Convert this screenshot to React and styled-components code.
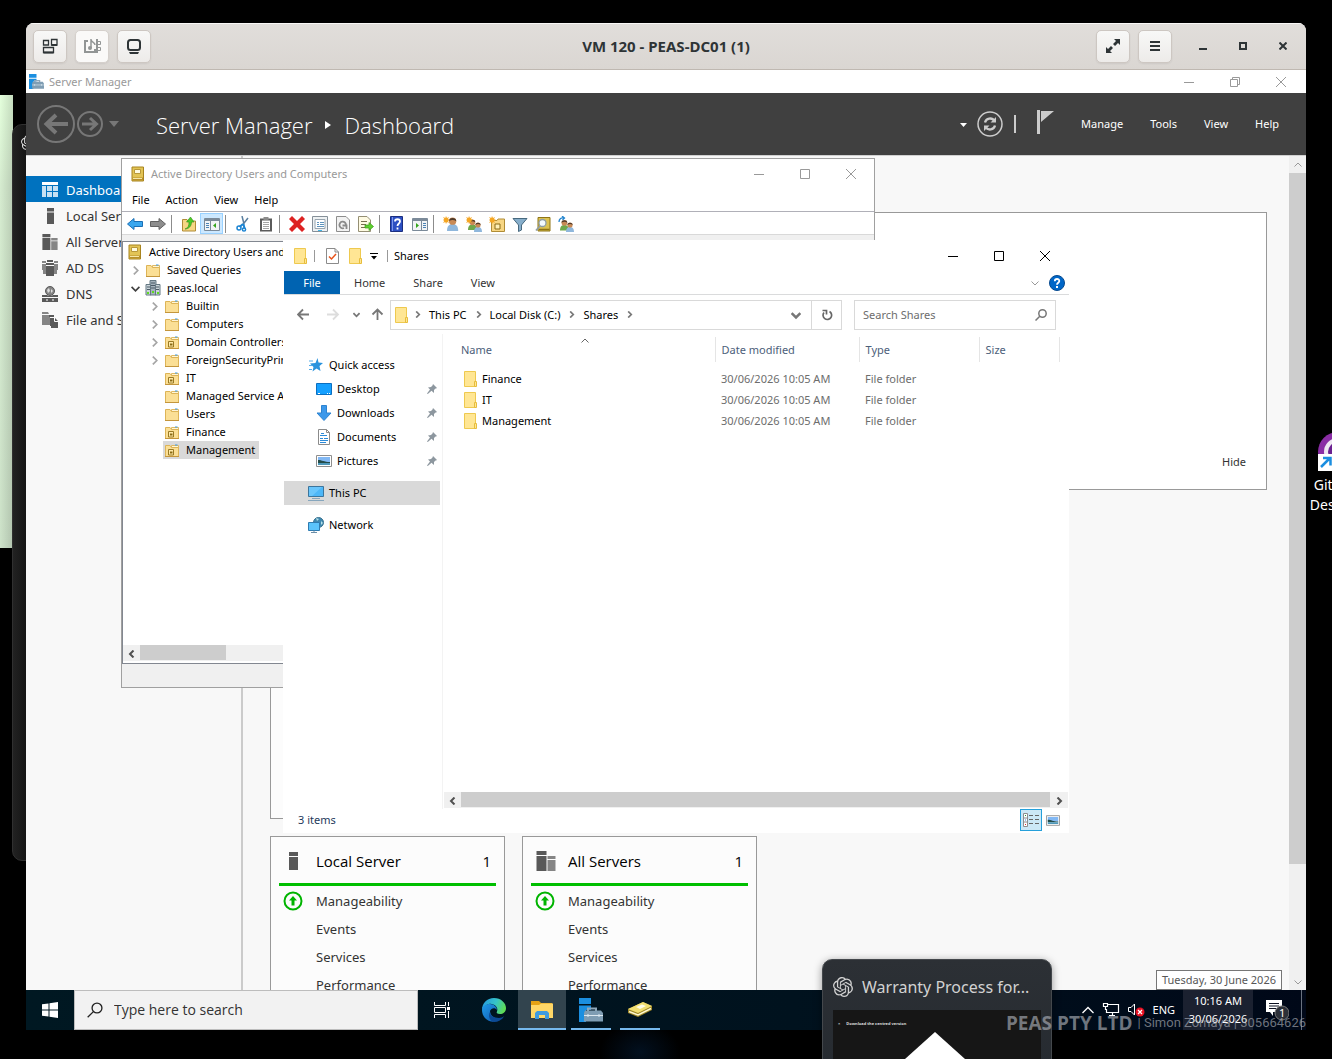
import React from "react";
import styled, { createGlobalStyle } from "styled-components";
import { SiOpenai } from "react-icons/si";

const GlobalStyle = createGlobalStyle`
  * { box-sizing: border-box; }
  body {
    margin: 0;
    background: #000;
    font-family: "Noto Sans", "Open Sans", sans-serif;
    font-size: 11px;
    line-height: 18px;
    color: #000;
  }
  button, input {
    font: inherit;
    color: inherit;
    border: 0;
    padding: 0;
    background: none;
  }
  a { color: inherit; text-decoration: none; }
  svg { display: block; flex: none; }
  ul { list-style: none; margin: 0; padding: 0; }
  h1, h2, h3, p { margin: 0; font: inherit; }
`;

/* ---------- icons ---------- */

const Svg = ({ w = 16, h = w, box, children, ...rest }) => (
  <svg width={w} height={h} viewBox={box || `0 0 ${w} ${h}`} fill="none" aria-hidden="true" {...rest}>
    {children}
  </svg>
);

const Chevron = ({ dir = "right", color = "#777", size = 8, weight = 2 }) => {
  const d = {
    right: "M2.5 .5L6 4L2.5 7.5",
    left: "M5.5 .5L2 4L5.5 7.5",
    down: "M.5 2.5L4 6L7.5 2.5",
    up: "M.5 5.5L4 2L7.5 5.5",
  }[dir];
  return (
    <Svg w={size} box="0 0 8 8">
      <path d={d} stroke={color} strokeWidth={weight} />
    </Svg>
  );
};

const MinIcon = ({ color }) => (
  <Svg w={10}><path d="M0 5.5H10" stroke={color} /></Svg>
);
const MaxIcon = ({ color }) => (
  <Svg w={10}><path d="M.5 .5H9.5V9.5H.5Z" stroke={color} /></Svg>
);
const RestoreIcon = ({ color }) => (
  <Svg w={10}><path d="M.5 2.5H7.5V9.5H.5ZM2.5 2.5V.5H9.5V7.5H7.5" stroke={color} /></Svg>
);
const CloseIcon = ({ color }) => (
  <Svg w={10}><path d="M0 0L10 10M10 0L0 10" stroke={color} /></Svg>
);

const PlainFolder = () => (
  <Svg w={14} h={16}>
    <path d="M.5 .5H11.5V15.5H.5Z" fill="#ffe694" stroke="#eec94f" />
    <path d="M10.5 10.5H12.5V15.5H10.5Z" fill="#ffe694" stroke="#e7bd3c" />
  </Svg>
);

const TreeFolder = ({ unit }) => (
  <Svg w={14} h={13}>
    <path d="M6.500 1.500H13.500V5H6.500Z" fill="#fff6d8" stroke="#e0b961" />
    <path d="M10 1H12.500" stroke="#3b9be8" />
    <path d="M.5 1.500H5L6.500 3.500H13.500V12.500H.5Z" fill="#fbdf95" stroke="#ddb457" />
    <path d="M0 12.500H14" stroke="#c4963c" />
    {unit && <path d="M3.500 5.500H8.500V11H3.500Z" fill="#ffe9a8" stroke="#9a7a24" />}
    {unit && <path d="M5 7.500H7.500V9.500H5Z" fill="#8a6a14" />}
  </Svg>
);

const BookIcon = () => (
  <Svg w={14} h={16}>
    <path d="M1 1H12.500V15H1Z" fill="#e2c455" stroke="#a8841f" />
    <path d="M1.500 11.500H12V14.500H1.500Z" fill="#b8902a" />
    <path d="M2 12.500H11" stroke="#f5e7a8" />
    <path d="M3.500 3.500H9.500V7.500H3.500Z" fill="#fffbe0" stroke="#b8983a" />
  </Svg>
);

const DomainIcon = () => (
  <Svg w={16}>
    <path d="M5 .5H11V15H5Z" fill="#a5b3bd" stroke="#657883" />
    <path d="M1 4.500H5.500V15H1ZM10.500 4.500H15V15H10.500Z" fill="#cbd5da" stroke="#657883" />
    <path d="M6 3H10M6 5.500H10M6 8H10M2 7H5M2 9.500H5M11 7H14M11 9.500H14" stroke="#4b5a66" />
    <path d="M3 12V14M8 11V13M13 12V14" stroke="#5edc1f" strokeWidth="2" />
  </Svg>
);

const Server = ({ w = 9, h = 18 }) => (
  <Svg w={w} h={h} box="0 0 9 18" preserveAspectRatio="none">
    <path d="M0 0H9V4H0ZM0 5H9V18H0Z" fill="#595959" />
  </Svg>
);
const Servers = ({ w = 16 }) => (
  <Svg w={w} box="0 0 19 20">
    <path d="M0 0H10V4H0ZM0 5H10V20H0Z" fill="#595959" />
    <path d="M11 5H19V8H11ZM11 9H19V20H11Z" fill="#858585" />
  </Svg>
);
const AdDsIcon = () => (
  <Svg w={16}>
    <path d="M0 1H4V3H0ZM0 4H4V14H1V10H0ZM12 1H16V3H12ZM12 4H16V10H15V14H12Z" fill="#858585" />
    <path d="M5 0H11V2H5ZM4 3H12V5H4ZM4 6H12V16H4Z" fill="#595959" />
  </Svg>
);
const DnsIcon = () => (
  <Svg w={16}>
    <circle cx="8" cy="5" r="4.500" fill="#858585" stroke="#595959" />
    <path d="M5 4L7 2L8 5L6 7ZM9 3L11 5L9 7Z" fill="#ddd" />
    <path d="M0 9H5L6.500 10H9.500L11 9H16V11H0ZM0 12H16V16H0Z" fill="#595959" />
    <path d="M4 14H6M10 14H12" stroke="#fff" />
  </Svg>
);
const StorageIcon = () => (
  <Svg w={16}>
    <path d="M0 0H6L7 2H0ZM0 3H8V13H0Z" fill="#858585" />
    <path d="M7 3H12V5H7ZM8 6H13L16 9V16H9V14H8Z" fill="#595959" />
    <path d="M12.500 6V9.500H16" stroke="#fff" />
  </Svg>
);
const DashboardIcon = () => (
  <Svg w={16}>
    <path d="M0 0H16V3H0Z" fill="#fff" />
    <path d="M0 4H4V15H0ZM5 4H10V9H5ZM11 4H16V9H11ZM5 10H10V15H5ZM11 10H16V15H11Z" fill="#c7e1f3" />
  </Svg>
);

const ToolboxIcon = ({ size = 15 }) => (
  <Svg w={size} box="0 0 24 24">
    <path d="M0 0H12V6H0ZM0 7.500H12V12H7V24H0Z" fill="#1b8fe0" />
    <path d="M9 13V10.500H17V13" stroke="#8fa8bb" strokeWidth="2" />
    <path d="M6 12.500H22L24 15V23.500H5V15Z" fill="#7f9db3" />
    <path d="M5 17.500H24M9 16V19M20 16V19" stroke="#dce8f0" />
  </Svg>
);

const StarIcon = () => (
  <Svg w={14}>
    <path d="M8.500 0L9.500 4.500L14 5L10.500 8L11.500 13L7.500 10.500L3.500 13.500L4.500 9L1 5.500L6.500 5Z" fill="#2a93dd" />
    <path d="M0 3H4M0 7.500H3M0 11.500H3" stroke="#54adea" />
  </Svg>
);
const DesktopIcon = () => (
  <Svg w={16} h={12}>
    <path d="M.5 .5H15.500V11.500H.5Z" fill="#15a0ff" stroke="#0b6fc0" />
    <path d="M2 10.500H4M11 10.500H12M13 10.500H14" stroke="#fff" />
  </Svg>
);
const DownloadIcon = () => (
  <Svg w={16}>
    <path d="M5.500 .5H10.500V8H15L8 15.500L1 8H5.500Z" fill="#3c98ea" stroke="#2d83d0" />
  </Svg>
);
const DocumentIcon = () => (
  <Svg w={14} h={16}>
    <path d="M1.500 .5H9.500L12.500 3.500V15.500H1.500Z" fill="#fff" stroke="#8b8b8b" />
    <path d="M9.500 .5V3.500H12.500" stroke="#8b8b8b" />
    <path d="M4 4.500H7M3 6.500H10M7 9.500H11M3 11.500H11M3 9.500H6M3 13.500H9" stroke="#2c8bd8" />
  </Svg>
);
const PictureIcon = ({ w = 16, h = 12 }) => (
  <Svg w={w} h={h} box="0 0 16 12">
    <path d="M.5 .5H15.500V11.500H.5Z" fill="#fff" stroke="#8e8e8e" />
    <path d="M2 2H14V7H2Z" fill="#82b8f4" />
    <path d="M2 5C6 5 8 7 14 7V8H2Z" fill="#234c4a" />
    <path d="M2 8H14V10H2Z" fill="#4d97b8" />
  </Svg>
);
const PcIcon = () => (
  <Svg w={16}>
    <path d="M.5 1.500H15.500V11.500H.5Z" fill="#4db7f8" stroke="#3c759c" />
    <path d="M1 2H14L4 11H1Z" fill="#7fd0ff" opacity=".6" />
    <path d="M4 13.500H12M0 15.500H16" stroke="#86a6bd" />
  </Svg>
);
const NetworkIcon = () => (
  <Svg w={16}>
    <circle cx="10.500" cy="5.500" r="5" fill="#3f88b0" stroke="#3a7390" />
    <path d="M8 1L11 2L9 4ZM13 4L15 6L13 8Z" fill="#b5dfe8" />
    <path d="M.5 5.500H11.500V13.500H.5Z" fill="#5bc3fb" stroke="#2f7bb0" />
    <path d="M3 15.500H9M6 13.500V15" stroke="#6b8ea8" />
  </Svg>
);
const PinIcon = () => (
  <Svg w={10}>
    <path d="M6 0L10 4L9 4.500L8.500 4.500L7 6L7 9L4.500 6.800L.8 10L0 9.600L3 5.500L1 3.500L4 3L5.500 1.500Z" fill="#8d979f" />
  </Svg>
);
const FolderCheck = () => (
  <Svg w={13} h={16}>
    <path d="M.5 .5H9L12.500 4V15.500H.5Z" fill="#fff" stroke="#8b8b8b" />
    <path d="M9 .5V4H12.500" stroke="#8b8b8b" />
    <path d="M3 8.500L5.500 11L10 6" stroke="#e9541b" strokeWidth="1.500" />
  </Svg>
);

const SearchGlass = ({ size = 12, color = "#777", weight = 1.500 }) => (
  <Svg w={size} box="0 0 12 12">
    <circle cx="7.500" cy="4.500" r="3.700" stroke={color} strokeWidth={weight} />
    <path d="M4.800 7.200L.5 11.500" stroke={color} strokeWidth={weight} />
  </Svg>
);

const ArrowIcon = ({ dir = "left", color = "#777" }) => {
  const d = {
    left: "M12 6.500H1M6 1.500L1 6.500L6 11.500",
    right: "M0 6.500H11M6 1.500L11 6.500L6 11.500",
    up: "M6.500 12V1.500M1.500 6.500L6.500 1.500L11.500 6.500",
  }[dir];
  return <Svg w={13}><path d={d} stroke={color} strokeWidth="1.800" /></Svg>;
};

// the arrow pane is on the right in the first drawing, on the left in the second
const WindowPane = ({ left }) => (
  <>
    <path d="M.5 2.500H15.500V14.500H.5Z" fill="#f2f4f6" stroke="#7b8a99" />
    <path d="M1 4H15" stroke="#7b8a99" strokeWidth="2" />
    <path d={left ? "M9.500 5V14" : "M6.500 5V14"} stroke="#7b8a99" />
    <path d={left ? "M11 7.500H14M11 9.500H14M11 11.500H14" : "M2 7.500H5M2 9.500H5M2 11.500H5"} stroke="#4c83b5" />
    <path d={left ? "M4 7L7 9.500L4 12Z" : "M12 7L9 9.500L12 12Z"} fill="#35a51c" />
  </>
);
const Person = ({ x, y, s = 1, body, head = "#c98a55" }) => (
  <g transform={`translate(${x} ${y}) scale(${s})`}>
    <path d="M0 10C0 6 2 5 4 5S8 6 8 10Z" fill={body} />
    <circle cx="4" cy="3" r="2.600" fill={head} />
    <path d="M1.400 3C1 0 7 0 6.600 3C5 1.800 3 1.800 1.400 3Z" fill="#4f3a2a" />
  </g>
);
const Spark = () => (
  <path d="M3 0L4 2L6 1L5 3L7 4L5 5L6 7L4 6L3 8L2.300 6L0 7L1.300 5L0 4L1.300 3L0 1L2.300 2Z" fill="#f5a623" />
);

const toolDrawings = {
  back: <path d="M.5 8L7 2.500V5.500H15.500V10.500H7V13.500Z" fill="#3aa7ee" stroke="#1a6fb5" />,
  forward: <path d="M15.500 8L9 2.500V5.500H.5V10.500H9V13.500Z" fill="#8d8d8d" stroke="#626262" />,
  up: (
    <>
      <path d="M1.500 3.500H6L7 5H14.500V15H1.500Z" fill="#f7d684" stroke="#b08c36" />
      <path d="M4 13C7 12 8 10 8 6H5.500L9.500 1L13 6H10.500C10.500 10 8 13 4 13Z" fill="#4ccb27" stroke="#2f8f17" strokeWidth=".6" />
    </>
  ),
  tree: <WindowPane />,
  cut: (
    <>
      <path d="M7 0L9 8M13 2L7.500 9" stroke="#5a7fa0" strokeWidth="1.500" />
      <path d="M4.500 11L8 8M9.500 12.500L8.500 8" stroke="#1c84d2" strokeWidth="2" />
      <circle cx="4" cy="12" r="2" stroke="#1c84d2" strokeWidth="1.500" />
      <circle cx="9" cy="13.500" r="1.600" stroke="#1c84d2" strokeWidth="1.500" />
    </>
  ),
  paste: (
    <>
      <path d="M2 2.500H14V15.500H2Z" fill="#5b5b5b" />
      <path d="M4 4.500H12V14H4Z" fill="#fff" />
      <path d="M5.500 1H10.500V4H5.500Z" fill="#8b8b8b" />
      <path d="M5 6.500H11M5 8.500H11M5 10.500H11M5 12.500H11" stroke="#a5a5a5" />
    </>
  ),
  remove: <path d="M3 0L8 5L13 0L16 3L11 8L16 13L13 16L8 11L3 16L0 13L5 8L0 3Z" fill="#dd2222" stroke="#f08a8a" strokeWidth=".6" />,
  props: (
    <>
      <path d="M.5 .5H15.500V15.500H.5Z" fill="#eef1f3" stroke="#858f98" />
      <path d="M3 3.500H13V12.500H3Z" fill="#fff" stroke="#98a4ae" />
      <path d="M5 6.500H7M8 6.500H12M5 8.500H7M8 8.500H12M5 10.500H12" stroke="#5e93bd" />
      <path d="M6 14.500H10" stroke="#3db4e8" />
    </>
  ),
  refresh: (
    <>
      <path d="M1.500 .5H11L14.500 4V15.500H1.500Z" fill="#f2f2f2" stroke="#8d8d8d" />
      <path d="M11 9A3.300 3.300 0 1 0 9 12M7.500 9.500H11.500V13" stroke="#8a8a8a" strokeWidth="1.800" />
    </>
  ),
  exportList: (
    <>
      <path d="M.5 .5H9L12.500 4V15.500H.5Z" fill="#fffbe3" stroke="#958f74" />
      <path d="M3 5.500H9M3 8.500H8M3 11.500H8" stroke="#77704f" />
      <path d="M7 9H11V6.500L15.500 10.500L11 14.500V12H7Z" fill="#5fd02f" stroke="#3b9b18" strokeWidth=".7" />
    </>
  ),
  help: (
    <>
      <path d="M1.500 .5H13.500V15.500H1.500Z" fill="#2c4fc2" stroke="#1c2f80" />
      <path d="M3.500 1V15" stroke="#7d97ea" />
      <path d="M6 5.500C6 2.500 11 2.500 11 5.500C11 7.500 8.500 7.500 8.500 10" stroke="#fff" strokeWidth="1.800" />
      <path d="M7.600 11.500H9.400V13.500H7.600Z" fill="#fff" />
    </>
  ),
  pane: <WindowPane left />,
  newUser: <><Person x={4} y={1} s={1.400} body="#8fb7dc" /><Spark /></>,
  newGroup: <><Person x={2} y={3} s={1.100} body="#6ea84b" /><Person x={8} y={6} s={1} body="#8fb7dc" /><Spark /></>,
  newUnit: (
    <>
      <path d="M2.500 4.500H8L9 3H15.500V15.500H2.500Z" fill="#f7d684" stroke="#b08c36" />
      <path d="M6 8H11V13H6Z" fill="#fff0b8" stroke="#8a6a14" />
      <Spark />
    </>
  ),
  filter: <path d="M1 2.500H15L9.500 9V14L6.500 15.500V9Z" fill="#86aecb" stroke="#48697f" />,
  find: (
    <>
      <path d="M3 1.500H15V15H3Z" fill="#dcc351" stroke="#8f7415" />
      <path d="M4 13.500H14.500" stroke="#8f7415" strokeWidth="1.500" />
      <circle cx="7.500" cy="7" r="3.500" fill="#f3fbfd" stroke="#8e9da5" strokeWidth="1.300" />
      <path d="M5 10L1 14.500" stroke="#8e9da5" strokeWidth="1.800" />
    </>
  ),
  addGroup: (
    <>
      <Person x={2} y={3.500} s={1.100} body="#6ea84b" />
      <Person x={8} y={6} s={1} body="#8fb7dc" />
      <path d="M1 6C1 3 3 1.500 5.500 2M4 0L6.500 2L4.500 4" stroke="#2686cf" strokeWidth="1.300" />
    </>
  ),
};

/* ---------- desktop behind the viewer ---------- */

const Desktop = styled.div`
  position: relative;
  height: 100vh;
  overflow: hidden;
  background: radial-gradient(ellipse 40px 30px at 640px 1052px, #02101f, transparent), #000;
`;

const GreenWindow = styled.div`
  position: absolute;
  top: 95px;
  left: 0;
  width: 13px;
  height: 453px;
  background: linear-gradient(to right, transparent, #0002), linear-gradient(#e4ffdc, #d6ecd0 20%, #cde2c9);
`;

const DarkWindow = styled.div`
  position: absolute;
  top: 124px;
  left: 12px;
  width: 40px;
  height: 737px;
  padding: 10px 8px;
  background: linear-gradient(to right, #222, #141414 14px);
  border: 1px solid #303030;
  border-radius: 10px;
  color: #ddd;
`;

const Shortcut = styled.a`
  position: absolute;
  top: 430px;
  left: 1300px;
  width: 74px;
  color: #fff;
  font-size: 14px;
  line-height: 20px;
  text-align: center;

  svg {
    margin: 0 0 4px 18px;
  }
`;

/* ---------- viewer ---------- */

const Viewer = styled.main`
  position: absolute;
  inset: 23px 26px 29px;
  display: flex;
  flex-direction: column;
  border-radius: 8px 8px 0 0;
  overflow: hidden;
  background: #f8f8f8;
`;

const ViewerBar = styled.header`
  display: grid;
  grid-template-columns: 1fr auto 1fr;
  align-items: center;
  height: 47px;
  padding: 0 7px;
  background: linear-gradient(#e1dedb, #dad6d2);
  border-bottom: 1px solid #bfb8b1;
  box-shadow: inset 0 1px #f9f8f7;
  color: #2e3436;
`;

const ViewerTitle = styled.h1`
  font-size: 15px;
  font-weight: 700;
`;

const ViewerActions = styled.div`
  display: flex;
  align-items: center;
  gap: 8px;
  justify-content: ${(props) => (props.$end ? "flex-end" : "flex-start")};
`;

const ViewerControls = styled.div`
  display: flex;
  gap: 8px;
  margin-left: 7px;
`;

const ViewerButton = styled.button`
  display: grid;
  place-items: center;
  width: 34px;
  height: 33px;
  border: 1px solid ${(props) => (props.$flat ? "#d5d0cc" : "#cdc7c2")};
  border-radius: 5px;
  background: ${(props) => (props.$flat ? "#faf9f8" : "linear-gradient(#f8f8f7, #edebe9)")};
  box-shadow: 0 1px 2px #0001;
`;

const ViewerControl = styled.button`
  display: grid;
  place-items: center;
  width: 32px;
  height: 32px;
`;

const Guest = styled.div`
  position: relative;
  flex: 1;
  min-height: 0;
  display: flex;
  flex-direction: column;
`;

const ControlGroup = styled.div`
  display: flex;
  margin-left: auto;
`;

const Control = styled.button`
  display: grid;
  place-items: center;
  width: 46px;
  height: 22px;
`;

const WindowControls = ({ color, restore }) => (
  <ControlGroup>
    <Control aria-label="Minimise"><MinIcon color={color} /></Control>
    <Control aria-label="Maximise">
      {restore ? <RestoreIcon color={color} /> : <MaxIcon color={color} />}
    </Control>
    <Control aria-label="Close"><CloseIcon color={color} /></Control>
  </ControlGroup>
);

/* ---------- server manager ---------- */

const ManagerTitle = styled.div`
  display: flex;
  align-items: center;
  gap: 5px;
  height: 23px;
  padding: 0 2px 0 3px;
  background: #fff;
  color: #999;
`;

const ManagerHeader = styled.div`
  display: flex;
  align-items: center;
  height: 63px;
  padding: 0 27px 0 11px;
  background: #404040;
  border-bottom: 1px solid #d0d0d0;
  color: #fff;
`;

const ManagerPath = styled.h2`
  display: flex;
  align-items: center;
  gap: 13px;
  margin-left: 36px;
  padding-top: 2px;
  font-family: "Open Sans", sans-serif;
  font-size: 22px;
  font-weight: 300;
  line-height: 32px;
`;

const ManagerTools = styled.div`
  display: flex;
  align-items: center;
  margin-left: auto;
`;

const ManagerMenu = styled.nav`
  display: flex;
  gap: 27px;
  margin-left: 26px;
`;

const ManagerBody = styled.div`
  flex: 1;
  min-height: 0;
  display: flex;
  overflow: hidden;
`;

const Sidebar = styled.nav`
  flex: none;
  width: 217px;
  padding-top: 20px;
  border-right: 2px solid #cbcbcb;
`;

const SideLink = styled.a`
  display: grid;
  grid-template-columns: 16px 1fr;
  align-items: center;
  gap: 8px;
  height: 26px;
  padding: 1px 0 0 16px;
  font-size: 13px;
  background: ${(props) => (props.$active ? "#0072bf" : "transparent")};
  color: ${(props) => (props.$active ? "#fff" : "#333")};

  svg {
    justify-self: center;
  }
`;

const Overview = styled.section`
  flex: 1;
  min-width: 0;
  padding: 56px 22px 0 27px;
`;

const Welcome = styled.div`
  display: flex;
  align-items: flex-end;
  justify-content: flex-end;
  height: 278px;
  padding: 18px 20px;
  background: #fff;
  border: 1px solid #999;
  color: #333;
`;

const RolesPanel = styled.div`
  width: 487px;
  height: 314px;
  margin: 15px 0 17px;
  background: #fcfcfc;
  border: 1px solid #999;
`;

const Cards = styled.div`
  display: grid;
  grid-template-columns: repeat(2, 235px);
  gap: 17px;
`;

const Card = styled.article`
  padding: 0 8px;
  background: #fcfcfc;
  border: 1px solid #999;
`;

const CardHead = styled.header`
  display: grid;
  grid-template-columns: 29px 1fr auto;
  align-items: center;
  gap: 8px;
  height: 49px;
  padding: 2px 5px 0 0;
  border-bottom: 3px solid #00bf00;
  font-family: "Open Sans", sans-serif;
  font-size: 15px;

  svg {
    justify-self: center;
  }
`;

const CardList = styled.ul`
  padding-top: 1px;
`;

const CardRow = styled.li`
  display: grid;
  grid-template-columns: 27px 1fr;
  align-items: center;
  gap: 10px;
  height: 28px;
  font-size: 13px;
  color: #333;

  svg {
    justify-self: center;
  }
`;

const RowLabel = styled.span`
  grid-column: 2;
`;

const VScroll = styled.div`
  flex: none;
  display: flex;
  flex-direction: column;
  align-items: center;
  width: 17px;
  background: #f0f0f0;
`;

const ScrollArrow = styled.button`
  display: grid;
  place-items: center;
  width: 17px;
  height: 17px;
`;

const VThumb = styled.div`
  width: 100%;
  flex: 691;
  background: #cdcdcd;
`;

const VTrack = styled.div`
  flex: 109;
`;

const sideLinks = [
  ["Dashboard", <DashboardIcon />],
  ["Local Server", <Server w={7} h={16} />],
  ["All Servers", <Servers />],
  ["AD DS", <AdDsIcon />],
  ["DNS", <DnsIcon />],
  ["File and Storage", <StorageIcon />],
];

const ServerCard = ({ title, icon }) => (
  <Card>
    <CardHead>
      {icon}
      <h3>{title}</h3>
      <span>1</span>
    </CardHead>
    <CardList>
      {["Manageability", "Events", "Services", "Performance"].map((label, i) => (
        <CardRow key={label}>
          {i === 0 && (
            <Svg w={20}>
              <circle cx="10" cy="10" r="8.500" stroke="#00b400" strokeWidth="2" />
              <path d="M10 5L14 9.500H11.500V14.500H8.500V9.500H6Z" fill="#00b400" />
            </Svg>
          )}
          <RowLabel>{label}</RowLabel>
        </CardRow>
      ))}
    </CardList>
  </Card>
);

const ServerManager = () => (
  <>
    <ManagerTitle>
      <ToolboxIcon />
      Server Manager
      <WindowControls color="#999" restore />
    </ManagerTitle>
    <ManagerHeader>
      <Svg w={83} h={38}>
        <g stroke="#777" strokeWidth="2">
          <circle cx="19" cy="19" r="18" />
          <circle cx="53" cy="19" r="12" />
        </g>
        <path d="M31 19H10M19 10L9.500 19L19 28" stroke="#777" strokeWidth="4" />
        <path d="M45 19H59M53 13L59.500 19L53 25" stroke="#777" strokeWidth="3" />
        <path d="M72 16H82L77 22Z" fill="#777" />
      </Svg>
      <ManagerPath>
        <span>Server Manager</span>
        <Svg w={6} h={8}><path d="M0 0L6 4L0 8Z" fill="#fff" /></Svg>
        <span>Dashboard</span>
      </ManagerPath>
      <ManagerTools>
        <Svg w={95} h={30}>
          <path d="M0 14H7L3.500 18Z" fill="#fff" />
          <circle cx="30" cy="15" r="12" stroke="#ccc" strokeWidth="1.500" />
          <path d="M25 13.500C26 9 32 8 34.500 12M35 16.500C34 21 28 22 25.500 18" stroke="#ccc" strokeWidth="2.300" />
          <path d="M36 8V13.500H30.500ZM24 22V16.500H29.500Z" fill="#ccc" />
          <path d="M55 6V24" stroke="#ccc" strokeWidth="2" />
          <path d="M77 1H80V25H77ZM81 2H94L81 13Z" fill="#ccc" />
        </Svg>
        <ManagerMenu>
          {["Manage", "Tools", "View", "Help"].map((item) => (
            <a href="#" key={item}>{item}</a>
          ))}
        </ManagerMenu>
      </ManagerTools>
    </ManagerHeader>
    <ManagerBody>
      <Sidebar>
        {sideLinks.map(([label, icon], i) => (
          <SideLink href="#" key={label} $active={i === 0}>
            {icon}
            {label}
          </SideLink>
        ))}
      </Sidebar>
      <Overview>
        <Welcome><a href="#">Hide</a></Welcome>
        <RolesPanel />
        <Cards>
          <ServerCard title="Local Server" icon={<Server w={9} h={18} />} />
          <ServerCard title="All Servers" icon={<Servers w={20} />} />
        </Cards>
      </Overview>
      <VScroll>
        <ScrollArrow aria-label="Scroll up"><Chevron dir="up" color="#999" weight={1} /></ScrollArrow>
        <VThumb />
        <VTrack />
        <ScrollArrow aria-label="Scroll down"><Chevron dir="down" color="#999" weight={1} /></ScrollArrow>
      </VScroll>
    </ManagerBody>
  </>
);

/* ---------- active directory ---------- */

const DirectoryWindow = styled.section`
  position: absolute;
  top: 88px;
  left: 95px;
  width: 754px;
  display: flex;
  flex-direction: column;
  background: #f0f0f0;
  border: 1px solid #a0a0a0;
`;

const DirectoryTitle = styled.div`
  display: flex;
  align-items: center;
  gap: 6px;
  height: 29px;
  padding-left: 9px;
  background: #fff;
  color: #999;
`;

const MenuBar = styled.nav`
  display: flex;
  gap: 16px;
  height: 24px;
  padding: 3px 10px;
  background: #fff;
  border-bottom: 1px solid #b0b0b8;
`;

const ToolBar = styled.div`
  display: flex;
  align-items: flex-end;
  height: 23px;
  padding-left: 1px;
  background: #fff;
  border-bottom: 1px solid #d9d9d9;
`;

const ToolButton = styled.button`
  display: grid;
  place-items: center;
  width: 23px;
  height: 21px;
  background: ${(props) => (props.$active ? "#cce8ff" : "none")};
  border: 1px solid ${(props) => (props.$active ? "#99d1ff" : "transparent")};
`;

const ToolSep = styled.span`
  width: 1px;
  height: 18px;
  margin: 0 5px 1px 2px;
  background: #8c8c8c;
`;

const TreePane = styled.div`
  display: flex;
  flex-direction: column;
  justify-content: space-between;
  height: 423px;
  margin: 6px 0 23px;
  padding: 1px 0 2px;
  background: #fff;
  border: 1px solid #828790;
`;

const TreeRow = styled.li`
  display: flex;
  align-items: center;
  height: 18px;
  padding-left: ${(props) => 3 + Math.max(0, props.$level - 1) * 19}px;
`;

const Twisty = styled.span`
  display: grid;
  place-items: center;
  width: 18px;
`;

const TreeItem = styled.a`
  display: grid;
  grid-template-columns: 18px auto;
  align-items: center;
  gap: 5px;
  padding-right: 4px;
  background: ${(props) => (props.$selected ? "#d9d9d9" : "none")};
  white-space: nowrap;

  svg {
    justify-self: center;
  }
`;

const HScroll = styled.div`
  display: flex;
  height: 16px;
  background: #f0f0f0;
`;

const HThumb = styled.div`
  height: 15px;
  width: ${(props) => props.$width};
  background: #cdcdcd;
`;

const tools = [
  ["back", "forward"],
  ["up", "tree"],
  ["cut", "paste"],
  ["remove", "props", "refresh", "exportList"],
  ["help", "pane"],
  ["newUser", "newGroup", "newUnit", "filter", "find", "addGroup"],
];

// [label, level, twisty, icon]
const tree = [
  ["Active Directory Users and Computers", 0, null, <BookIcon />],
  ["Saved Queries", 1, "right", <TreeFolder />],
  ["peas.local", 1, "down", <DomainIcon />],
  ["Builtin", 2, "right", <TreeFolder />],
  ["Computers", 2, "right", <TreeFolder />],
  ["Domain Controllers", 2, "right", <TreeFolder unit />],
  ["ForeignSecurityPrincipals", 2, "right", <TreeFolder />],
  ["IT", 2, null, <TreeFolder unit />],
  ["Managed Service Accounts", 2, null, <TreeFolder />],
  ["Users", 2, null, <TreeFolder />],
  ["Finance", 2, null, <TreeFolder unit />],
  ["Management", 2, null, <TreeFolder unit />],
];

const Directory = () => (
  <DirectoryWindow>
    <DirectoryTitle>
      <BookIcon />
      Active Directory Users and Computers
      <WindowControls color="#999" />
    </DirectoryTitle>
    <MenuBar>
      {["File", "Action", "View", "Help"].map((item) => (
        <a href="#" key={item}>{item}</a>
      ))}
    </MenuBar>
    <ToolBar>
      {tools.map((group, i) => (
        <React.Fragment key={group[0]}>
          {i > 0 && <ToolSep />}
          {group.map((name) => (
            <ToolButton key={name} aria-label={name} $active={name === "tree"}>
              <Svg w={16}>{toolDrawings[name]}</Svg>
            </ToolButton>
          ))}
        </React.Fragment>
      ))}
    </ToolBar>
    <TreePane>
      <ul>
        {tree.map(([label, level, twisty, icon]) => (
          <TreeRow key={label} $level={level}>
            {level > 0 && (
              <Twisty>
                {twisty && (
                  <Chevron dir={twisty} size={9} color={twisty === "down" ? "#404040" : "#a6a6a6"} weight={1.500} />
                )}
              </Twisty>
            )}
            <TreeItem href="#" $selected={label === "Management"}>
              {icon}
              {label}
            </TreeItem>
          </TreeRow>
        ))}
      </ul>
      <HScroll>
        <ScrollArrow aria-label="Scroll left"><Chevron dir="left" color="#505050" /></ScrollArrow>
        <HThumb $width="86px" />
      </HScroll>
    </TreePane>
  </DirectoryWindow>
);

/* ---------- explorer ---------- */

const ExplorerWindow = styled.section`
  position: absolute;
  top: 170px;
  left: 257px;
  width: 786px;
  display: flex;
  flex-direction: column;
  padding-left: 1px;
  background: #fff;
`;

const ExplorerTitle = styled.div`
  display: flex;
  align-items: center;
  height: 31px;
  padding: 0 1px 0 10px;
`;

const QuickButton = styled.button`
  display: grid;
  place-items: center;
  width: ${(props) => (props.$narrow ? "14px" : "23px")};
  height: 22px;
`;

const QuickSep = styled.span`
  width: 1px;
  height: 12px;
  margin: 0 6px;
  background: #999;
`;

const Ribbon = styled.nav`
  display: flex;
  align-items: center;
  height: 24px;
  padding-right: 4px;
  border-bottom: 1px solid #dadbdc;
`;

const RibbonTab = styled.a`
  padding: 0 14px;
  line-height: 23px;
  color: #333;
`;

const FileTab = styled(RibbonTab)`
  width: 56px;
  padding: 0;
  text-align: center;
  background: #0063b1;
  color: #fff;
`;

const RibbonEnd = styled.div`
  display: flex;
  align-items: center;
  gap: 10px;
  margin-left: auto;
`;

const AddressRow = styled.div`
  display: flex;
  align-items: center;
  height: 39px;
  padding: 0 13px 0 4px;
`;

const NavButton = styled.button`
  display: grid;
  place-items: center;
  width: ${(props) => props.$width || 30}px;
  height: 30px;
`;

const AddressBar = styled.div`
  flex: 1;
  display: flex;
  align-items: center;
  height: 30px;
  padding-left: 4px;
  border: 1px solid #d9d9d9;
`;

const Crumb = styled.a`
  display: flex;
  align-items: center;

  svg {
    margin: 0 8px;
  }

  &:first-of-type svg {
    margin-left: 5px;
  }
`;

const AddressEnd = styled.div`
  display: flex;
  align-items: center;
  height: 100%;
  margin-left: auto;
`;

const RefreshButton = styled(NavButton)`
  border-left: 1px solid #d9d9d9;
`;

const SearchBox = styled.label`
  display: flex;
  align-items: center;
  width: 202px;
  height: 30px;
  margin-left: 12px;
  padding: 0 8px;
  border: 1px solid #d9d9d9;
`;

const SearchInput = styled.input`
  flex: 1;
  min-width: 0;
  outline: 0;

  &::placeholder {
    color: #6d6d6d;
    opacity: 1;
  }
`;

const ExplorerBody = styled.div`
  display: grid;
  grid-template-columns: 159px 1fr;
  height: 475px;
`;

const Places = styled.nav`
  display: flex;
  flex-direction: column;
  padding: 19px 2px 0 0;
  border-right: 1px solid #f3f3f3;
`;

const Place = styled.a`
  display: grid;
  grid-template-columns: 16px 1fr auto;
  align-items: center;
  gap: 5px;
  height: 24px;
  margin-bottom: ${(props) => (props.$last ? 8 : 0)}px;
  padding: 0 3px 0 ${(props) => (props.$nested ? 32 : 24)}px;
  background: ${(props) => (props.$selected ? "#d9d9d9" : "none")};

  svg {
    justify-self: center;
  }
`;

const Files = styled.div`
  display: flex;
  flex-direction: column;
  justify-content: space-between;
  min-width: 0;
  padding: 3px 1px 1px;
`;

const FileTable = styled.table`
  width: 615px;
  table-layout: fixed;
  border-collapse: collapse;
  color: #6d6d6d;
  text-align: left;
`;

const Heading = styled.th`
  position: relative;
  width: ${(props) => props.$width}px;
  height: 25px;
  padding: 0 6px;
  border-right: 1px solid #e5e5e5;
  color: #4c607a;
  font-weight: 400;

  &:first-child {
    padding-left: 17px;
  }
`;

const SortMark = styled.span`
  position: absolute;
  top: 0;
  left: 137px;
`;

const FileRows = styled.tbody`
  &::before {
    content: "";
    display: table-row;
    height: 6px;
  }
`;

const Cell = styled.td`
  height: 21px;
  padding: 0 6px;
`;

const NameCell = styled(Cell)`
  padding-left: 20px;
  color: #000;
`;

const FileName = styled.a`
  display: flex;
  align-items: center;
  gap: 4px;
`;

const StatusBar = styled.footer`
  display: flex;
  align-items: center;
  height: 24px;
  padding: 0 5px 2px 14px;
  color: #1e395b;
`;

const ViewSwitch = styled.div`
  display: flex;
  margin-left: auto;
`;

const ViewButton = styled.button`
  display: grid;
  place-items: center;
  width: 22px;
  height: 22px;
  background: ${(props) => (props.$active ? "#cce8f6" : "none")};
  border: 1px solid ${(props) => (props.$active ? "#26a0da" : "transparent")};
`;

// [label, icon, nested, last of its group]
const places = [
  ["Quick access", <StarIcon />, false, false],
  ["Desktop", <DesktopIcon />, true, false],
  ["Downloads", <DownloadIcon />, true, false],
  ["Documents", <DocumentIcon />, true, false],
  ["Pictures", <PictureIcon />, true, true],
  ["This PC", <PcIcon />, false, true],
  ["Network", <NetworkIcon />, false, false],
];

const Explorer = () => (
  <ExplorerWindow>
    <ExplorerTitle>
      <PlainFolder />
      <QuickSep />
      <QuickButton aria-label="Properties"><FolderCheck /></QuickButton>
      <QuickButton aria-label="New folder"><PlainFolder /></QuickButton>
      <QuickButton aria-label="Customise" $narrow>
        <Svg w={8} h={8}><path d="M0 1.500H8" stroke="#000" /><path d="M1 4H7L4 7.500Z" fill="#000" /></Svg>
      </QuickButton>
      <QuickSep />
      <span>Shares</span>
      <WindowControls color="#000" />
    </ExplorerTitle>
    <Ribbon>
      <FileTab href="#">File</FileTab>
      {["Home", "Share", "View"].map((tab) => (
        <RibbonTab href="#" key={tab}>{tab}</RibbonTab>
      ))}
      <RibbonEnd>
        <Chevron dir="down" color="#999" weight={1} />
        <Svg w={16}>
          <circle cx="8" cy="8" r="7.500" fill="#0067c8" stroke="#074a8f" />
          <path d="M5.800 6.300C5.800 3.200 10.300 3.400 10.300 6C10.300 7.800 8 7.800 8 9.800" stroke="#fff" strokeWidth="1.800" />
          <path d="M7 11H9V13H7Z" fill="#fff" />
        </Svg>
      </RibbonEnd>
    </Ribbon>
    <AddressRow>
      <NavButton aria-label="Back"><ArrowIcon /></NavButton>
      <NavButton aria-label="Forward"><ArrowIcon dir="right" color="#ddd" /></NavButton>
      <NavButton aria-label="Recent" $width={16}><Chevron dir="down" size={7} /></NavButton>
      <NavButton aria-label="Up" $width={26}><ArrowIcon dir="up" /></NavButton>
      <AddressBar>
        <PlainFolder />
        {["", "This PC", "Local Disk (C:)", "Shares"].map((part) => (
          <Crumb href="#" key={part}>
            {part}
            <Chevron size={7} />
          </Crumb>
        ))}
        <AddressEnd>
          <NavButton aria-label="History"><Chevron dir="down" size={10} /></NavButton>
          <RefreshButton aria-label="Refresh">
            <Svg w={12}>
              <path d="M8.500 2.500A4.300 4.300 0 1 1 3 3.500M1.500 1.500H5.500V5.500" stroke="#666" strokeWidth="1.700" />
            </Svg>
          </RefreshButton>
        </AddressEnd>
      </AddressBar>
      <SearchBox>
        <SearchInput placeholder="Search Shares" aria-label="Search Shares" />
        <SearchGlass />
      </SearchBox>
    </AddressRow>
    <ExplorerBody>
      <Places>
        {places.map(([label, icon, nested, last]) => (
          <Place href="#" key={label} $nested={nested} $last={last} $selected={label === "This PC"}>
            {icon}
            {label}
            {nested && <PinIcon />}
          </Place>
        ))}
      </Places>
      <Files>
        <FileTable>
          <thead>
            <tr>
              <Heading $width={271}>
                Name
                <SortMark><Chevron dir="up" color="#666" weight={1} /></SortMark>
              </Heading>
              <Heading $width={144}>Date modified</Heading>
              <Heading $width={120}>Type</Heading>
              <Heading $width={80}>Size</Heading>
            </tr>
          </thead>
          <FileRows>
            {["Finance", "IT", "Management"].map((name) => (
              <tr key={name}>
                <NameCell><FileName href="#"><PlainFolder />{name}</FileName></NameCell>
                <Cell>30/06/2026 10:05 AM</Cell>
                <Cell>File folder</Cell>
                <Cell />
              </tr>
            ))}
          </FileRows>
        </FileTable>
        <HScroll>
          <ScrollArrow aria-label="Scroll left"><Chevron dir="left" color="#505050" /></ScrollArrow>
          <HThumb $width="calc(100% - 35px)" />
          <ScrollArrow aria-label="Scroll right"><Chevron color="#505050" /></ScrollArrow>
        </HScroll>
      </Files>
    </ExplorerBody>
    <StatusBar>
      3 items
      <ViewSwitch>
        <ViewButton aria-label="Details" $active>
          <Svg w={18} h={14}>
            <path d="M1.500 .5H5.500V13.500H1.500ZM1.500 5H5.500M1.500 9H5.500" fill="#fff" stroke="#8e8e8e" />
            <path d="M3 2.500H4" stroke="#2a9a3c" /><path d="M3 7H4" stroke="#2c7be0" /><path d="M3 11.500H4" stroke="#d33" />
            <path d="M7 2.500H11M7 6.500H11M7 10.500H11M13 2.500H17M13 6.500H17M13 10.500H17" stroke="#666" />
          </Svg>
        </ViewButton>
        <ViewButton aria-label="Large icons"><PictureIcon w={14} h={11} /></ViewButton>
      </ViewSwitch>
    </StatusBar>
  </ExplorerWindow>
);

/* ---------- taskbar ---------- */

const TaskBar = styled.footer`
  position: relative;
  display: flex;
  height: 40px;
  background: linear-gradient(to right, #001822, #00121e 60%, #000818);
  color: #fff;
`;

const TaskButton = styled.button`
  display: grid;
  place-items: center;
  width: ${(props) => (props.$open ? 40 : 48)}px;
  margin: 0 ${(props) => (props.$open ? 4 : 0)}px 0 ${(props) => (props.$open ? 5 : 0)}px;
  background: ${(props) => (props.$active ? "#32444e" : "none")};
  box-shadow: ${(props) => (props.$open || props.$active ? "inset 0 -2px #76b9ed" : "none")};
`;

const TaskApps = styled.div`
  display: flex;
  margin-left: 4px;
`;

const TaskSearch = styled.label`
  display: flex;
  align-items: center;
  gap: 11px;
  width: 344px;
  padding: 0 12px;
  background: #f2f2f2;
  border: 1px solid #bdbdbd;
  color: #333;
`;

const TaskInput = styled.input`
  flex: 1;
  min-width: 0;
  outline: 0;
  font-family: "Open Sans", sans-serif;
  font-size: 14px;

  &::placeholder {
    color: #333;
    opacity: 1;
  }
`;

const Tray = styled.div`
  display: flex;
  align-items: center;
  gap: 8px;
  margin-left: auto;
  padding-right: 4px;
`;

const Clock = styled.time`
  width: 70px;
  height: 40px;
  padding-top: 2px;
  background: #1b2130;
  text-align: center;
`;

const Notices = styled.button`
  width: 41px;
  height: 40px;
  padding-left: 4px;
  border-right: 1px solid #6a7280;
`;

const DateTip = styled.div`
  position: absolute;
  right: 24px;
  bottom: 40px;
  padding: 0 5px;
  background: #fff;
  border: 1px solid #767676;
  color: #575757;
`;

const Task = () => (
  <TaskBar>
    <TaskButton aria-label="Start">
      <Svg w={16}><path d="M0 2.300L6.500 1.400V7.500H0ZM7.500 1.200L16 0V7.500H7.500ZM0 8.500H6.500V14.600L0 13.700ZM7.500 8.500H16V16L7.500 14.800Z" fill="#fff" /></Svg>
    </TaskButton>
    <TaskSearch>
      <SearchGlass size={16} color="#222" weight={1} />
      <TaskInput placeholder="Type here to search" aria-label="Type here to search" />
    </TaskSearch>
    <TaskButton aria-label="Task view">
      <Svg w={16}>
        <path d="M.5 0V3.500H11.500V0M.5 16V12.500H11.500V16M.5 5.500H11.500V10.500H.5ZM14.500 0V4M14.500 9V16" stroke="#fff" />
        <path d="M13 5H16V8H13Z" fill="#fff" />
      </Svg>
    </TaskButton>
    <TaskApps>
      <TaskButton aria-label="Edge">
        <Svg w={24}>
          <defs>
            <linearGradient id="edgeTop" x1="0" y1=".2" x2="1" y2=".5">
              <stop offset="0" stopColor="#2598e0" />
              <stop offset=".55" stopColor="#36c4c8" />
              <stop offset="1" stopColor="#5fdc54" />
            </linearGradient>
            <linearGradient id="edgeBase" x1="0" y1="0" x2="1" y2="1">
              <stop offset="0" stopColor="#1f9ae8" />
              <stop offset="1" stopColor="#0f56ad" />
            </linearGradient>
          </defs>
          <path d="M0 12C0 5 5 0 12 0C19 0 24 5 24 10C24 14 21 16 18 16C15 16 14 15 15 13.500C17 9 11 5 7 6C3 7 1 9 0 12Z" fill="url(#edgeTop)" />
          <path d="M0 12C0 8 4 6 8 6C12 6 15 9 15 12C13 9 9 10 8 13C8 18 13 21 17 21C14 23 11 24 9 23.500C4 22.500 0 18 0 12Z" fill="url(#edgeBase)" />
          <path d="M8 14C8 18 13 20 17 20C19 20 21 19 22.300 18C20 22 16 24 12 24C7 23 6 17 8 14Z" fill="#0c4a94" />
        </Svg>
      </TaskButton>
      <TaskButton aria-label="File Explorer" $active>
        <Svg w={22} h={18}>
          <path d="M0 0H8L10 2H21V6H0Z" fill="#e5a215" />
          <path d="M0 4H8L10 2.500H22V17H0Z" fill="#ffd767" />
          <path d="M4 18V12L6 10H16L18 12V18H14V14H8V18Z" fill="#3e9be0" />
        </Svg>
      </TaskButton>
      <TaskButton aria-label="Server Manager" $open><ToolboxIcon size={24} /></TaskButton>
      <TaskButton aria-label="Active Directory" $open>
        <Svg w={24} h={18}>
          <path d="M0 8L15 1L24 5V9L10 16L0 12Z" fill="#9c8525" />
          <path d="M0 8L15 1L24 5L10 12Z" fill="#f1df72" />
          <path d="M1 10.500L10 14L23 7.500" stroke="#fff8cf" strokeWidth="1.500" />
          <path d="M8 6L14 3.500L18 5L12 8Z" fill="#fffde8" />
        </Svg>
      </TaskButton>
    </TaskApps>
    <Tray>
      <Svg w={12} h={8}><path d="M.5 7L6 1.500L11.500 7" stroke="#fff" strokeWidth="1.300" /></Svg>
      <Svg w={18} h={16}>
        <path d="M6 2.500H16.500V10.500H4.500V7M7 13.500H13M10.500 11V13" stroke="#fff" strokeWidth="1.200" />
        <path d="M1.500 1.500H5.500V4.500H1.500ZM3.500 5V8" stroke="#fff" strokeWidth="1.200" />
      </Svg>
      <Svg w={17} h={14}>
        <path d="M.5 4.500H3L6.500 1V12L3 8.500H.5Z" stroke="#fff" />
        <circle cx="12" cy="9" r="4.500" fill="#e81123" />
        <path d="M10 7L14 11M14 7L10 11" stroke="#fff" strokeWidth="1.200" />
      </Svg>
      <span>ENG</span>
      <Clock>10:16 AM<br />30/06/2026</Clock>
      <Notices aria-label="Notifications">
        <Svg w={24} h={22}>
          <path d="M1 1H17V13H8V17L5 13H1Z" fill="#fff" />
          <path d="M4 4.500H14M4 7H14M4 9.500H11" stroke="#0b1020" />
          <circle cx="17" cy="14" r="7" fill="#2c3038" stroke="#777" />
          <text x="14" y="18" fontSize="11" fill="#fff">1</text>
        </Svg>
      </Notices>
    </Tray>
    <DateTip>Tuesday, 30 June 2026</DateTip>
  </TaskBar>
);

/* ---------- overlays of the host ---------- */

const Preview = styled.aside`
  position: absolute;
  left: 822px;
  bottom: -30px;
  width: 230px;
  height: 130px;
  padding: 12px 10px;
  background: linear-gradient(#2c3035, #252a30);
  border: 1px solid #44484c;
  border-radius: 10px;
  box-shadow: 0 2px 8px #0006;
  color: #d2d2d2;
`;

const PreviewTitle = styled.h2`
  display: flex;
  align-items: center;
  gap: 9px;
  font-size: 16px;
  line-height: 30px;
  white-space: nowrap;
`;

const Thumbnail = styled.div`
  position: relative;
  height: 80px;
  margin-top: 8px;
  padding-top: 5px;
  background: #161616;
  color: #ddd;
  font-size: 4px;
  font-weight: 700;
  line-height: 18px;

  svg {
    position: absolute;
    top: 22px;
    left: 72px;
  }
`;

const ThumbLine = styled.p`
  display: flex;
  gap: 6px;
  padding: 0 5px;
`;

const Stamp = styled.p`
  position: absolute;
  right: 26px;
  bottom: 24px;
  display: flex;
  align-items: center;
  gap: 5px;
  color: #a8acb4a8;
  font-family: Roboto, sans-serif;
  font-size: 13px;
  line-height: 24px;
  white-space: nowrap;
`;

const StampName = styled.strong`
  font-family: "Open Sans", sans-serif;
  font-size: 19px;
  font-weight: 700;
`;

const App = () => (
  <Desktop>
    <GlobalStyle />
    <GreenWindow />
    <DarkWindow><SiOpenai size={16} /></DarkWindow>
    <Shortcut href="#">
      <Svg w={40} h={41}>
        <circle cx="20" cy="22" r="20" fill="#8a2da5" />
        <circle cx="20" cy="22" r="14" fill="#eee8f2" />
        <circle cx="20" cy="22" r="10" fill="#6b2190" />
        <path d="M0 24H16V41H0Z" fill="#fff" />
        <path d="M3 37L12 28M5 28H12.500V35.500" stroke="#1b8ee0" strokeWidth="2.500" />
      </Svg>
      GitHub<br />Desktop
    </Shortcut>
    <Viewer>
      <ViewerBar>
        <ViewerActions>
          <ViewerButton aria-label="Machines">
            <Svg w={16}>
              <path d="M1.500 2.500H6.500V7H1.500ZM9.500 1.500H15V7H9.500ZM1.500 9.500H11.500V14.500H1.500Z" stroke="#2e3436" strokeWidth="1.300" />
              <path d="M9.500 7H15M1.500 14.500H11.500" stroke="#2e3436" strokeWidth="2" />
            </Svg>
          </ViewerButton>
          <ViewerButton aria-label="Sound" $flat>
            <Svg w={18} h={16}>
              <path d="M5 3H2V14H12V11M14 1V15" stroke="#929595" strokeWidth="2" />
              <path d="M8 1V10M8 2C9 5 12 4 12 7" stroke="#929595" strokeWidth="1.500" />
              <circle cx="7" cy="10" r="2" fill="#929595" />
              <path d="M14 3.500H17.500V6.500H14M14 9.500H17.500V12.500H14" stroke="#929595" />
            </Svg>
          </ViewerButton>
          <ViewerButton aria-label="Display">
            <Svg w={16}>
              <rect x="2" y="2" width="12" height="10" rx="2.500" stroke="#2e3436" strokeWidth="2" />
              <path d="M3 14H13L12 16H4Z" fill="#2e3436" />
            </Svg>
          </ViewerButton>
        </ViewerActions>
        <ViewerTitle>VM 120 - PEAS-DC01 (1)</ViewerTitle>
        <ViewerActions $end>
          <ViewerButton aria-label="Full screen">
            <Svg w={14}>
              <path d="M8 0H14V6L12 4L9 7L7 5L10 2ZM6 14H0V8L2 10L5 7L7 9L4 12Z" fill="#2e3436" />
            </Svg>
          </ViewerButton>
          <ViewerButton aria-label="Menu">
            <Svg w={10}><path d="M0 1H10M0 5H10M0 9H10" stroke="#2e3436" strokeWidth="2" /></Svg>
          </ViewerButton>
          <ViewerControls>
            <ViewerControl aria-label="Minimise">
              <Svg w={8}><path d="M0 7H8" stroke="#2e3436" strokeWidth="2" /></Svg>
            </ViewerControl>
            <ViewerControl aria-label="Maximise">
              <Svg w={8}><path d="M1 1H7V7H1Z" stroke="#2e3436" strokeWidth="2" /></Svg>
            </ViewerControl>
            <ViewerControl aria-label="Close">
              <Svg w={8}><path d="M.5 .5L7.500 7.500M7.500 .5L.5 7.500" stroke="#2e3436" strokeWidth="2" /></Svg>
            </ViewerControl>
          </ViewerControls>
        </ViewerActions>
      </ViewerBar>
      <Guest>
        <ServerManager />
        <Directory />
        <Explorer />
        <Task />
      </Guest>
    </Viewer>
    <Preview>
      <PreviewTitle><SiOpenai size={20} />Warranty Process for...</PreviewTitle>
      <Thumbnail>
        <ThumbLine><span>×</span>Download the centred version</ThumbLine>
        <Svg w={60} h={50}><path d="M30 0L60 27V50H0V27Z" fill="#fff" /></Svg>
      </Thumbnail>
    </Preview>
    <Stamp><StampName>PEAS PTY LTD</StampName>| Simon Zomaya | 305664626</Stamp>
  </Desktop>
);

export default App;
